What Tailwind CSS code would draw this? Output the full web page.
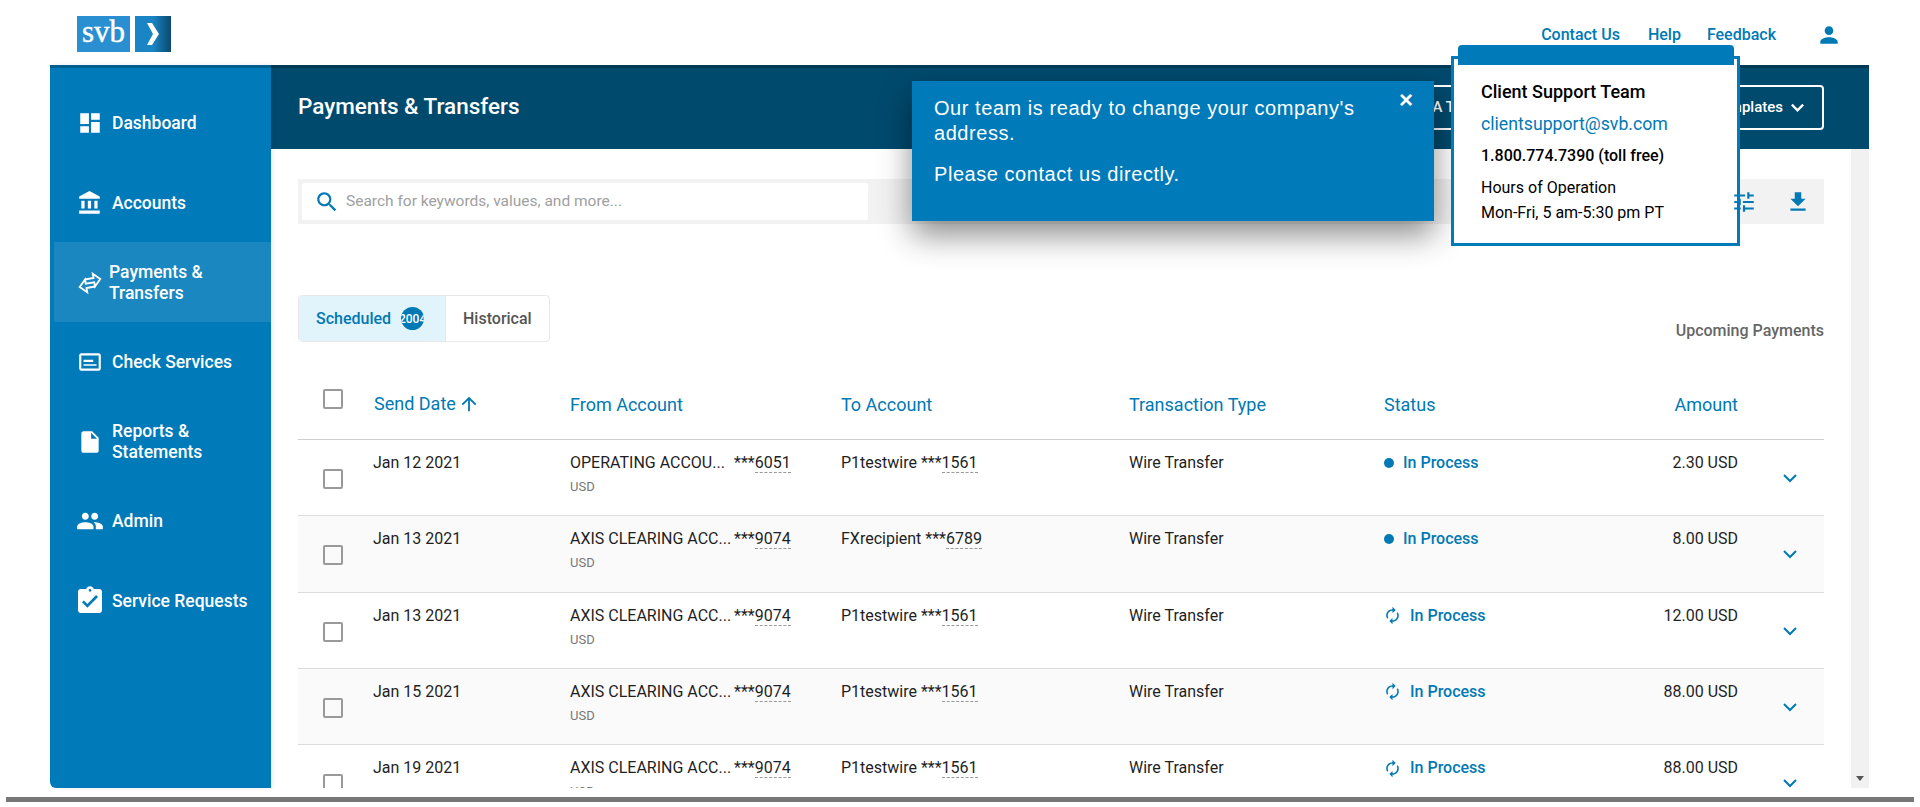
<!DOCTYPE html>
<html lang="en">
<head>
<meta charset="UTF-8">
<title>Payments &amp; Transfers</title>
<script src="https://cdn.jsdelivr.net/npm/@tailwindcss/browser@4"></script>
</head>
<body class="bg-white font-['Roboto',sans-serif] text-[#1f1f1f]">
<div class="relative h-[807px] w-[1920px] overflow-hidden">

  <!-- Top bar -->
  <header class="flex h-[65px] items-start pl-[77px]">
    <div class="mt-[16px] flex gap-[5px]">
      <div class="flex h-[36px] w-[53px] items-center justify-center bg-[#2a8fd0] pb-[3px] font-['Liberation_Serif',serif] text-[31px] text-white [-webkit-text-stroke:0.4px_white]">svb</div>
      <div class="flex h-[36px] w-[36px] items-center bg-gradient-to-r from-[#1a85c5] via-[#1a85c5] to-[#0a4a6e] pl-[11px]">
        <svg class="h-[24px] w-[14px]" viewBox="0 0 14 24"><path d="M1 1h5l7 11-7 11H1l6-11z" fill="#fff"/></svg>
      </div>
    </div>
    <nav class="ml-auto mr-[78px] mt-[22px] flex items-center text-[16px] font-medium leading-[26px] text-[#0079b5]">
      <a>Contact Us</a>
      <a class="ml-[28px]">Help</a>
      <a class="ml-[26px]">Feedback</a>
      <svg class="ml-[40px] h-[26px] w-[26px] fill-current" viewBox="0 0 24 24"><path d="M12 12c2.210 0 4-1.790 4-4s-1.790-4-4-4-4 1.790-4 4 1.790 4 4 4zm0 2c-2.670 0-8 1.340-8 4v2h16v-2c0-2.660-5.330-4-8-4z"/></svg>
    </nav>
  </header>

  <div class="ml-[50px] flex h-[723px] w-[1819px]">
    <!-- Sidebar -->
    <aside class="z-10 w-[221px] shrink-0 rounded-bl-[6px] border-t-[3px] border-[#005f8f] bg-[#007ab8] pt-[14px] text-[17.500px] font-medium leading-[21px] text-white shadow-[2px_0_4px_rgba(0,0,0,0.08)]">
      <a class="flex h-[80px] items-center pl-[27px] pt-[2px]">
        <svg class="h-[26px] w-[26px] shrink-0 fill-current" viewBox="0 0 24 24"><path d="M3 13h8V3H3v10zm0 8h8v-6H3v6zm10 0h8V11h-8v10zm0-18v6h8V3h-8z"/></svg>
        <span class="ml-[9px]">Dashboard</span>
      </a>
      <a class="flex h-[80px] items-center pl-[27px] pt-[2px]">
        <svg class="h-[26px] w-[26px] shrink-0 fill-current" viewBox="0 0 24 24"><path d="M4 10v7h3v-7H4zm6 0v7h3v-7h-3zM2 22h19v-3H2v3zm14-12v7h3v-7h-3zm-4.500-9L2 6v2h19V6l-9.500-5z"/></svg>
        <span class="ml-[9px]">Accounts</span>
      </a>
      <a class="ml-[4px] flex h-[80px] items-center bg-[#1a87c0] pl-[23px] pt-[2px]">
        <svg class="h-[26px] w-[26px] shrink-0 -rotate-[10deg] fill-none stroke-current stroke-[1.700]" viewBox="0 0 24 24"><path d="M8 8h8V4l6 6-6 6v-4H8zM16 16H8v4l-6-6 6-6v4h8z"/></svg>
        <span class="ml-[6px]">Payments &amp;<br>Transfers</span>
      </a>
      <a class="flex h-[80px] items-center pl-[27px]">
        <svg class="h-[26px] w-[26px] shrink-0 fill-current" viewBox="0 0 24 24"><path d="M20 4H4c-1.100 0-2 .9-2 2v12c0 1.100.9 2 2 2h16c1.100 0 2-.9 2-2V6c0-1.100-.9-2-2-2zm0 14H4V6h16v12zM6 10h9v2H6zm0 4h12v1.500H6z"/></svg>
        <span class="ml-[9px]">Check Services</span>
      </a>
      <a class="flex h-[80px] items-center pl-[27px]">
        <svg class="h-[26px] w-[26px] shrink-0 fill-current" viewBox="0 0 24 24"><path d="M6 2c-1.100 0-1.990.9-1.990 2L4 20c0 1.100.89 2 1.990 2H18c1.100 0 2-.9 2-2V8l-6-6H6zm7 7V3.500L18.500 9H13z"/></svg>
        <span class="ml-[9px]">Reports &amp;<br>Statements</span>
      </a>
      <a class="-mt-[1px] flex h-[80px] items-center pl-[26px]">
        <svg class="h-[28px] w-[28px] shrink-0 fill-current" viewBox="0 0 24 24"><path d="M16 11c1.660 0 2.990-1.340 2.990-3S17.660 5 16 5c-1.660 0-3 1.340-3 3s1.340 3 3 3zm-8 0c1.660 0 2.990-1.340 2.990-3S9.660 5 8 5C6.340 5 5 6.340 5 8s1.340 3 3 3zm0 2c-2.330 0-7 1.170-7 3.500V19h14v-2.500c0-2.330-4.670-3.500-7-3.500zm8 0c-.29 0-.62.02-.97.05 1.160.84 1.970 1.970 1.970 3.450V19h6v-2.500c0-2.330-4.670-3.500-7-3.500z"/></svg>
        <span class="ml-[8px]">Admin</span>
      </a>
      <a class="flex h-[80px] items-center pl-[24px]">
        <svg class="h-[32px] w-[32px] shrink-0 fill-current" viewBox="0 0 24 24"><path d="M19 3h-4.180C14.400 1.840 13.300 1 12 1c-1.300 0-2.400.84-2.820 2H5c-1.100 0-2 .9-2 2v14c0 1.100.9 2 2 2h14c1.100 0 2-.9 2-2V5c0-1.100-.9-2-2-2zm-7 0c.55 0 1 .45 1 1s-.45 1-1 1-1-.45-1-1 .45-1 1-1zm-2 14l-4-4 1.410-1.410L10 14.170l6.590-6.590L18 9l-8 8z"/></svg>
        <span class="ml-[6px]">Service Requests</span>
      </a>
    </aside>

    <div class="flex min-w-0 flex-1 flex-col">
      <!-- Page header -->
      <div class="flex h-[84px] shrink-0 items-center border-t-[3px] border-[#003a57] bg-[#004a6e] pl-[27px] pr-[45px] text-white">
        <h1 class="mb-[3px] text-[22.500px] font-medium">Payments &amp; Transfers</h1>
        <div class="mb-[2px] ml-auto flex gap-[16px] text-[15px] font-medium">
          <button class="h-[45px] w-[210px] whitespace-nowrap rounded-[4px] border-2 border-white pl-[102px] text-left">PAY A TRANSFER</button>
          <button class="flex h-[45px] w-[300px] items-center justify-end gap-[7px] rounded-[4px] border-2 border-white pr-[17px]">
            New From Templates
            <svg class="h-[15px] w-[15px] fill-none stroke-current stroke-[2.500]" viewBox="0 0 16 16"><path d="M2 5l6 6 6-6"/></svg>
          </button>
        </div>
      </div>

      <div class="flex min-h-0 flex-1">
        <!-- Content -->
        <main class="relative min-w-0 flex-1 overflow-hidden px-[27px] pt-[30px]">
          <div class="flex h-[45px] items-center bg-[#f2f2f2] pl-[4px] pr-[13px]">
            <div class="flex h-[37px] w-[566px] items-center rounded-[2px] bg-white pl-[12px] text-[15.500px] text-[#a0a0a0]">
              <svg class="h-[26px] w-[26px] fill-[#0079b5]" viewBox="0 0 24 24"><path d="M15.500 14h-.79l-.28-.27C15.410 12.590 16 11.110 16 9.500 16 5.910 13.090 3 9.500 3S3 5.910 3 9.500 5.910 16 9.500 16c1.610 0 3.090-.59 4.230-1.570l.27.28v.79l5 4.990L20.490 19l-4.990-5zm-6 0C7.010 14 5 11.990 5 9.500S7.010 5 9.500 5 14 7.010 14 9.500 11.990 14 9.500 14z"/></svg>
              <span class="ml-[6px]">Search for keywords, values, and more...</span>
            </div>
            <svg class="relative z-30 ml-auto h-[26px] w-[26px] fill-[#0079b5]" viewBox="0 0 24 24"><path d="M3 17v2h6v-2H3zM3 5v2h10V5H3zm10 16v-2h8v-2h-8v-2h-2v6h2zM7 9v2H3v2h4v2h2V9H7zm14 4v-2H11v2h10zm-6-4h2V7h4V5h-4V3h-2v6z"/></svg>
            <svg class="ml-[28px] h-[26px] w-[26px] fill-[#0079b5]" viewBox="0 0 24 24"><path d="M19 9h-4V3H9v6H5l7 7 7-7zM5 18v2h14v-2H5z"/></svg>
          </div>

          <div class="mt-[71px] flex items-end justify-between">
            <div class="flex h-[47px] w-[252px] rounded-[4px] border border-[#e8e8e8] text-[16px] font-medium">
              <div class="flex w-[146px] items-center rounded-l-[4px] bg-[#e1f3fb] pl-[17px] text-[#0079b5]">
                Scheduled
                <span class="ml-[10px] flex h-[23px] w-[23px] items-center justify-center overflow-hidden rounded-full bg-[#0079b5] text-[12px] text-white">2004</span>
              </div>
              <div class="flex flex-1 items-center border-l border-[#e8e8e8] pl-[17px] text-[#555]">Historical</div>
            </div>
            <span class="-mb-[1px] text-[16px] font-medium text-[#666]">Upcoming Payments</span>
          </div>

          <!-- Table -->
          <div class="mt-[23px]">
            <div class="grid h-[75px] grid-cols-[76px_196px_271px_288px_255px_200px_154px_86px] border-b border-[#cfcfcf] pt-[29px] text-[18px] leading-[22px] text-[#0079b5]">
              <span class="pl-[25px]"><span class="-mt-[5px] block h-[20px] w-[20px] rounded-[2px] border-2 border-[#999]"></span></span>
              <span class="-mt-[1px] flex items-start">Send Date
                <svg class="ml-[2px] h-[22px] w-[22px] fill-current" viewBox="0 0 24 24"><path d="M4 12l1.410 1.410L11 7.830V20h2V7.830l5.580 5.590L20 12l-8-8-8 8z"/></svg>
              </span>
              <span>From Account</span>
              <span>To Account</span>
              <span>Transaction Type</span>
              <span>Status</span>
              <span class="text-right">Amount</span>
              <span></span>
            </div>

            <div class="grid h-[76.250px] grid-cols-[76px_196px_271px_288px_255px_200px_154px_86px] border-b border-[#dcdcdc] bg-white pt-[12px] text-[16px] leading-[22px]">
              <span class="pl-[25px]"><span class="mt-[17px] block h-[20px] w-[20px] rounded-[2px] border-2 border-[#999]"></span></span>
              <span class="-ml-[1px]">Jan 12 2021</span>
              <div><div class="flex"><span class="w-[164px]">OPERATING ACCOU...</span><span>***<span class="border-b border-dashed border-[#999]">6051</span></span></div><div class="mt-[2px] text-[13px] text-[#777]">USD</div></div>
              <span><span>P1testwire ***</span><span class="border-b border-dashed border-[#999]">1561</span></span>
              <span>Wire Transfer</span>
              <span class="flex items-center self-start font-medium text-[#0079b5]"><span class="mr-[9px] h-[10px] w-[10px] rounded-full bg-[#0079b5]"></span>In Process</span>
              <span class="text-right">2.30 USD</span>
              <span class="pl-[43px] pt-[17px]"><svg class="h-[18px] w-[18px] fill-none stroke-[#0079b5] stroke-2" viewBox="0 0 18 18"><path d="M3 6l6 6 6-6"/></svg></span>
            </div>

            <div class="grid h-[76.250px] grid-cols-[76px_196px_271px_288px_255px_200px_154px_86px] border-b border-[#dcdcdc] bg-[#fafafa] pt-[12px] text-[16px] leading-[22px]">
              <span class="pl-[25px]"><span class="mt-[17px] block h-[20px] w-[20px] rounded-[2px] border-2 border-[#999]"></span></span>
              <span class="-ml-[1px]">Jan 13 2021</span>
              <div><div class="flex"><span class="w-[164px]">AXIS CLEARING ACC...</span><span>***<span class="border-b border-dashed border-[#999]">9074</span></span></div><div class="mt-[2px] text-[13px] text-[#777]">USD</div></div>
              <span><span>FXrecipient ***</span><span class="border-b border-dashed border-[#999]">6789</span></span>
              <span>Wire Transfer</span>
              <span class="flex items-center self-start font-medium text-[#0079b5]"><span class="mr-[9px] h-[10px] w-[10px] rounded-full bg-[#0079b5]"></span>In Process</span>
              <span class="text-right">8.00 USD</span>
              <span class="pl-[43px] pt-[17px]"><svg class="h-[18px] w-[18px] fill-none stroke-[#0079b5] stroke-2" viewBox="0 0 18 18"><path d="M3 6l6 6 6-6"/></svg></span>
            </div>

            <div class="grid h-[76.250px] grid-cols-[76px_196px_271px_288px_255px_200px_154px_86px] border-b border-[#dcdcdc] bg-white pt-[12px] text-[16px] leading-[22px]">
              <span class="pl-[25px]"><span class="mt-[17px] block h-[20px] w-[20px] rounded-[2px] border-2 border-[#999]"></span></span>
              <span class="-ml-[1px]">Jan 13 2021</span>
              <div><div class="flex"><span class="w-[164px]">AXIS CLEARING ACC...</span><span>***<span class="border-b border-dashed border-[#999]">9074</span></span></div><div class="mt-[2px] text-[13px] text-[#777]">USD</div></div>
              <span><span>P1testwire ***</span><span class="border-b border-dashed border-[#999]">1561</span></span>
              <span>Wire Transfer</span>
              <span class="flex items-center self-start font-medium text-[#0079b5]"><svg class="-ml-[1px] mr-[8px] h-[19px] w-[19px] fill-current" viewBox="0 0 24 24"><path d="M12 6v3l4-4-4-4v3c-4.420 0-8 3.580-8 8 0 1.570.46 3.030 1.240 4.260L6.700 14.800c-.45-.83-.7-1.790-.7-2.800 0-3.310 2.690-6 6-6zm6.760 1.740L17.300 9.200c.44.84.7 1.790.7 2.800 0 3.310-2.690 6-6 6v-3l-4 4 4 4v-3c4.420 0 8-3.580 8-8 0-1.570-.46-3.030-1.240-4.260z"/></svg>In Process</span>
              <span class="text-right">12.00 USD</span>
              <span class="pl-[43px] pt-[17px]"><svg class="h-[18px] w-[18px] fill-none stroke-[#0079b5] stroke-2" viewBox="0 0 18 18"><path d="M3 6l6 6 6-6"/></svg></span>
            </div>

            <div class="grid h-[76.250px] grid-cols-[76px_196px_271px_288px_255px_200px_154px_86px] border-b border-[#dcdcdc] bg-[#fafafa] pt-[12px] text-[16px] leading-[22px]">
              <span class="pl-[25px]"><span class="mt-[17px] block h-[20px] w-[20px] rounded-[2px] border-2 border-[#999]"></span></span>
              <span class="-ml-[1px]">Jan 15 2021</span>
              <div><div class="flex"><span class="w-[164px]">AXIS CLEARING ACC...</span><span>***<span class="border-b border-dashed border-[#999]">9074</span></span></div><div class="mt-[2px] text-[13px] text-[#777]">USD</div></div>
              <span><span>P1testwire ***</span><span class="border-b border-dashed border-[#999]">1561</span></span>
              <span>Wire Transfer</span>
              <span class="flex items-center self-start font-medium text-[#0079b5]"><svg class="-ml-[1px] mr-[8px] h-[19px] w-[19px] fill-current" viewBox="0 0 24 24"><path d="M12 6v3l4-4-4-4v3c-4.420 0-8 3.580-8 8 0 1.570.46 3.030 1.240 4.260L6.700 14.800c-.45-.83-.7-1.790-.7-2.800 0-3.310 2.690-6 6-6zm6.760 1.740L17.300 9.200c.44.84.7 1.790.7 2.800 0 3.310-2.690 6-6 6v-3l-4 4 4 4v-3c4.420 0 8-3.580 8-8 0-1.570-.46-3.030-1.240-4.260z"/></svg>In Process</span>
              <span class="text-right">88.00 USD</span>
              <span class="pl-[43px] pt-[17px]"><svg class="h-[18px] w-[18px] fill-none stroke-[#0079b5] stroke-2" viewBox="0 0 18 18"><path d="M3 6l6 6 6-6"/></svg></span>
            </div>

            <div class="grid h-[76.250px] grid-cols-[76px_196px_271px_288px_255px_200px_154px_86px] bg-white pt-[12px] text-[16px] leading-[22px]">
              <span class="pl-[25px]"><span class="mt-[17px] block h-[20px] w-[20px] rounded-[2px] border-2 border-[#999]"></span></span>
              <span class="-ml-[1px]">Jan 19 2021</span>
              <div><div class="flex"><span class="w-[164px]">AXIS CLEARING ACC...</span><span>***<span class="border-b border-dashed border-[#999]">9074</span></span></div><div class="mt-[2px] text-[13px] text-[#777]">USD</div></div>
              <span><span>P1testwire ***</span><span class="border-b border-dashed border-[#999]">1561</span></span>
              <span>Wire Transfer</span>
              <span class="flex items-center self-start font-medium text-[#0079b5]"><svg class="-ml-[1px] mr-[8px] h-[19px] w-[19px] fill-current" viewBox="0 0 24 24"><path d="M12 6v3l4-4-4-4v3c-4.420 0-8 3.580-8 8 0 1.570.46 3.030 1.240 4.260L6.700 14.800c-.45-.83-.7-1.790-.7-2.800 0-3.310 2.690-6 6-6zm6.760 1.740L17.300 9.200c.44.84.7 1.790.7 2.800 0 3.310-2.690 6-6 6v-3l-4 4 4 4v-3c4.420 0 8-3.580 8-8 0-1.570-.46-3.030-1.240-4.260z"/></svg>In Process</span>
              <span class="text-right">88.00 USD</span>
              <span class="pl-[43px] pt-[17px]"><svg class="h-[18px] w-[18px] fill-none stroke-[#0079b5] stroke-2" viewBox="0 0 18 18"><path d="M3 6l6 6 6-6"/></svg></span>
            </div>
          </div>
        </main>
        <!-- Scrollbar -->
        <div class="relative w-[18px] shrink-0 bg-[#f1f1f1]">
          <span class="absolute bottom-[7px] left-[5px] border-x-[4px] border-t-[5px] border-x-transparent border-t-[#555]"></span>
        </div>
      </div>
    </div>
  </div>

  <div class="ml-[6px] mt-[9px] h-[5px] w-[1908px] bg-[#777]"></div>

  <!-- Address message -->
  <div class="absolute left-[912px] top-[81px] z-20 h-[140px] w-[522px] bg-[#007ab8] pl-[22px] pr-[60px] pt-[15px] font-['Liberation_Sans',sans-serif] text-[20px] leading-[25px] tracking-[0.550px] text-white shadow-[0_14px_30px_rgba(0,0,0,0.45)]">
    <p>Our team is ready to change your company's address.</p>
    <p class="mt-[16px]">Please contact us directly.</p>
    <span class="absolute left-[487px] top-[6px] text-[24px] font-bold">×</span>
  </div>

  <!-- Client support tooltip -->
  <div class="absolute left-[1451px] top-[56px] z-20 h-[190px] w-[289px] border-[3px] border-[#007ab8] bg-white pl-[27px] pt-[22px] text-black">
    <div class="absolute -top-[14px] left-[4px] h-[20px] w-[276px] rounded-t-[4px] bg-[#007ab8]"></div>
    <p class="text-[18px] font-medium leading-[22px]">Client Support Team</p>
    <p class="mt-[10px] text-[17.700px] leading-[22px] text-[#0079b5]">clientsupport@svb.com</p>
    <p class="mt-[10px] text-[16px] font-medium leading-[22px]">1.800.774.7390 (toll free)</p>
    <p class="mt-[10px] text-[16px] leading-[22px]">Hours of Operation</p>
    <p class="mt-[3px] text-[16px] leading-[22px]">Mon-Fri, 5 am-5:30 pm PT</p>
  </div>
</div>
</body>
</html>
